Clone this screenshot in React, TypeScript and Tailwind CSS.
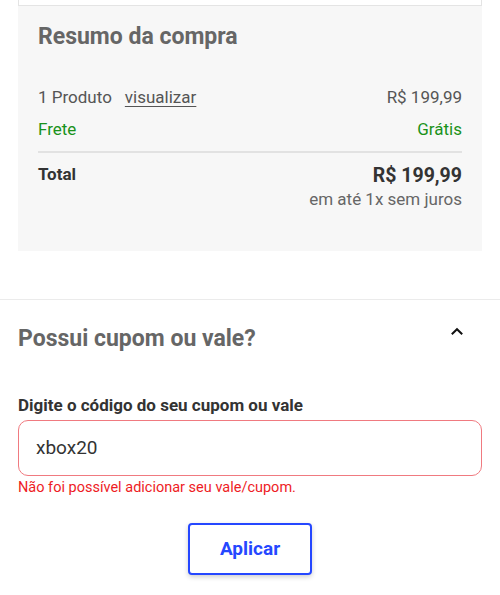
import React from "react";

export default function App() {
  return (
    <div className="w-[500px] h-[595px] overflow-hidden bg-white" style={{ fontFamily: "Roboto, 'Noto Sans', sans-serif" }}>
      <div className="mx-[18px] h-[6px] border-x border-b border-[#e4e4e4] bg-white" />
      <div className="mx-[18px] h-[245px] bg-[#f7f7f7] px-5 pt-[17px]">
        <h2 className="text-[23px] leading-[28px] font-bold text-[#666]">Resumo da compra</h2>
        <div className="mt-[35px] flex items-center justify-between text-[17px] leading-[22px] text-[#555]">
          <div className="flex items-center gap-[13px]">
            <span>1 Produto</span>
            <span className="underline underline-offset-[3px] text-[#555]">visualizar</span>
          </div>
          <span>R$ 199,99</span>
        </div>
        <div className="mt-[10px] flex items-center justify-between text-[17px] leading-[22px] text-[#1a921a]">
          <span>Frete</span>
          <span>Grátis</span>
        </div>
        <div className="mt-[11px] h-[2px] bg-[#e2e2e2]" />
        <div className="mt-[10px] flex justify-between">
          <span className="text-[17px] leading-[22px] font-bold text-[#333]">Total</span>
          <div className="flex flex-col items-end">
            <span className="text-[19.5px] leading-[25px] font-bold text-[#333]">R$ 199,99</span>
            <span className="text-[17px] leading-[22px] text-[#666]">em até 1x sem juros</span>
          </div>
        </div>
      </div>
      <div className="mt-[48px] h-px bg-[#ebebeb]" />
      <div className="px-[18px]">
        <div className="mt-[25px] flex items-start justify-between">
          <h2 className="text-[23px] leading-[28px] font-bold text-[#666]">Possui cupom ou vale?</h2>
          <svg width="14" height="9" viewBox="0 0 14 9" className="mt-[2px] mr-[18px]">
            <path d="M1.8 7.2 L7 2.2 L12.2 7.2" fill="none" stroke="#111" strokeWidth="2" />
          </svg>
        </div>
        <div className="mt-[41px] text-[17px] leading-[22px] font-bold text-[#333]">Digite o código do seu cupom ou vale</div>
        <div className="mt-[4px] h-[56px] rounded-[10px] border border-[#f07a80] bg-white px-[17px] flex items-center text-[19px] text-[#333]">
          xbox20
        </div>
        <div className="mt-[2px] text-[14.5px] leading-[20px] text-[#ee1c25]">Não foi possível adicionar seu vale/cupom.</div>
        <div className="mt-[25px] flex justify-center">
          <button className="w-[124px] h-[52px] rounded-[4px] border-2 border-[#2547ff] bg-white text-[19px] font-bold text-[#2547ff] shadow-[0_2px_5px_rgba(0,0,0,0.2)]">
            Aplicar
          </button>
        </div>
      </div>
    </div>
  );
}
